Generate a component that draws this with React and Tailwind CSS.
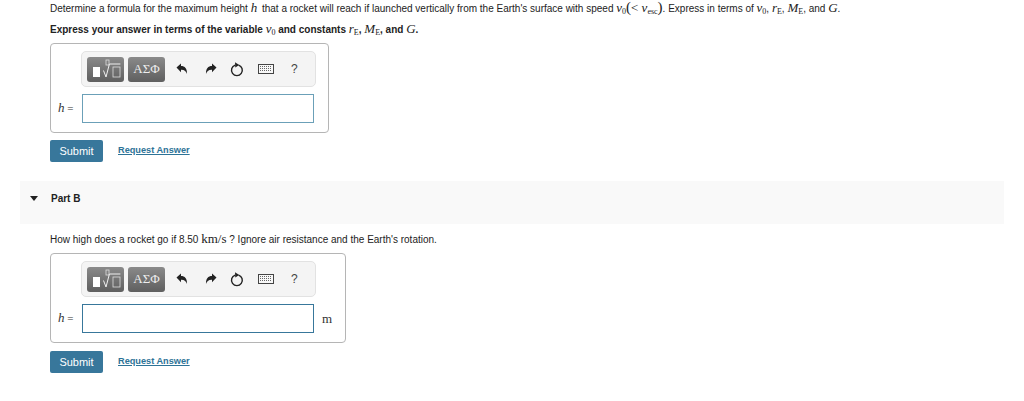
import React from 'react';

const mathFont = "font-['Liberation_Serif',serif]";

function V({ children, sub }) {
    return (
        <span className={`${mathFont} font-normal italic text-[13px] leading-none`}>
            {children}
            {sub && <span className="not-italic text-[8px] leading-none align-[-2px]">{sub}</span>}
        </span>
    );
}

function TemplateIcon() {
    return (
        <svg width="35" height="21" viewBox="0 0 35 21" fill="none">
            <rect x="5" y="8" width="7" height="10" fill="#fff" />
            <rect x="18" y="1" width="3" height="5" stroke="#ddd" strokeWidth="0.8" />
            <path d="M15.5 11.5l2.5 6.5 3.4-13h11" stroke="#f0f0f0" strokeWidth="1" />
            <rect x="25" y="8" width="7" height="10" stroke="#ddd" strokeWidth="0.8" />
        </svg>
    );
}

function UndoIcon({ flip }) {
    return (
        <svg width="12" height="12" viewBox="0 0 12 12" className={flip ? '-scale-x-100' : ''}>
            <path d="M0.5 4.5 5 0.5v2.6c3.8 0 6.2 2.5 6 7.9-0.9-2.8-2.4-4.4-6-4.3v2.6z" fill="#222" />
        </svg>
    );
}

function ResetIcon() {
    return (
        <svg width="14" height="15" viewBox="0 0 14 15" fill="none">
            <path d="M8.6 3.1a5.4 5.4 0 1 1-3.4 0" stroke="#222" strokeWidth="1.4" />
            <path d="M5 0.3 9.2 3 5.3 5.6z" fill="#222" />
        </svg>
    );
}

function KeyboardIcon() {
    return (
        <svg width="16" height="10" viewBox="0 0 16 10" fill="none">
            <rect x="0.5" y="0.5" width="15" height="9" fill="#f8f8f8" stroke="#444" />
            <path d="M2 2.5h12M2 4.5h12M2 6.5h12" stroke="#666" strokeDasharray="1 1" />
        </svg>
    );
}

function Toolbar() {
    return (
        <div className="w-[235px] h-[36px] ml-[30px] flex items-center pl-[5px] bg-[#f4f4f4] border border-[#e2e2e2] rounded-[5px]">
            <div className="w-[37px] h-[25px] flex items-center justify-center rounded-[3px] bg-gradient-to-b from-[#8a8a8a] to-[#5f5f5f]">
                <TemplateIcon />
            </div>
            <div className={`w-[37px] h-[25px] ml-[4px] flex items-center justify-center rounded-[3px] bg-gradient-to-b from-[#8a8a8a] to-[#5f5f5f] text-[#eee] text-[13px] ${mathFont}`}>
                ΑΣΦ
            </div>
            <div className="ml-[10px] w-[13px] flex justify-center"><UndoIcon /></div>
            <div className="ml-[16px] w-[13px] flex justify-center"><UndoIcon flip /></div>
            <div className="ml-[13px] w-[14px] flex justify-center"><ResetIcon /></div>
            <div className="ml-[14px] w-[16px] flex justify-center"><KeyboardIcon /></div>
            <div className="ml-[17px] text-[12px] text-[#444]">?</div>
        </div>
    );
}

function AnswerBox({ unit, inputBorder, width }) {
    return (
        <div className={`${width} mt-[6px] h-[90px] pt-[7px] border border-[#b5b5b5] rounded-[4px]`}>
            <Toolbar />
            <div className="flex items-center mt-[7px] h-[29px]">
                <div className="w-[31px] pl-[7px] whitespace-nowrap text-[#333]">
                    <V>h</V> <span className={`${mathFont} text-[11px]`}>=</span>
                </div>
                <div className={`w-[232px] h-[29px] bg-white border ${inputBorder}`} />
                {unit && <span className={`ml-[8px] text-[13px] text-[#333] ${mathFont}`}>{unit}</span>}
            </div>
        </div>
    );
}

function Actions({ top }) {
    return (
        <div className={`flex items-center ${top}`}>
            <button className="w-[53px] h-[22px] bg-[#38779b] text-white text-[11px] rounded-[2px]">Submit</button>
            <a className="ml-[15px] text-[#2d7397] text-[9.2px] font-bold underline">Request Answer</a>
        </div>
    );
}

export default function App() {
    return (
        <div className="w-[1024px] h-[401px] overflow-hidden bg-white text-[#222] font-['Liberation_Sans',sans-serif] text-[10px]">
            <div className="pl-[50px]">
                <p className="h-[16px] leading-[18px] whitespace-nowrap">
                    Determine a formula for the maximum height <V>h</V><span className="ml-[2px]"> that</span> a rocket will reach if launched vertically from the Earth's surface with speed <V sub="0">v</V><span className={`${mathFont} text-[15px] leading-none`}>(</span><span className={`${mathFont} text-[13px] leading-none`}>&lt; </span><V sub="esc">v</V><span className={`${mathFont} text-[15px] leading-none`}>)</span>. Express in terms of <V sub="0">v</V>, <V sub="E">r</V>, <V sub="E">M</V>, and <V>G</V>.
                </p>
                <p className="mt-[5px] h-[16px] leading-[18px] font-bold whitespace-nowrap">
                    Express your answer in terms of the variable <V sub="0">v</V> and constants <V sub="E">r</V>, <V sub="E">M</V>, and <V>G</V>.
                </p>
                <AnswerBox width="w-[279px]" inputBorder="border-[#6ba0b8]" />
                <Actions top="mt-[7px]" />
            </div>
            <div className="ml-[20px] w-[984px] h-[43px] mt-[19px] bg-[#f9f9f9] flex items-start pt-[12px]">
                <svg width="8" height="5" viewBox="0 0 8 5" className="ml-[10px] mt-[3px]">
                    <path d="M0 0h8L4 5z" fill="#222" />
                </svg>
                <span className="ml-[13px] font-bold leading-[12px]">Part B</span>
            </div>
            <div className="pl-[50px]">
                <p className="mt-[7px] h-[16px] leading-[18px] whitespace-nowrap">
                    How high does a rocket go if 8.50 <span className={`${mathFont} text-[13px] leading-none`}>km/s</span> ? Ignore air resistance and the Earth's rotation.
                </p>
                <AnswerBox width="w-[296px]" inputBorder="border-[#38779b]" unit="m" />
                <Actions top="mt-[8px]" />
            </div>
        </div>
    );
}
